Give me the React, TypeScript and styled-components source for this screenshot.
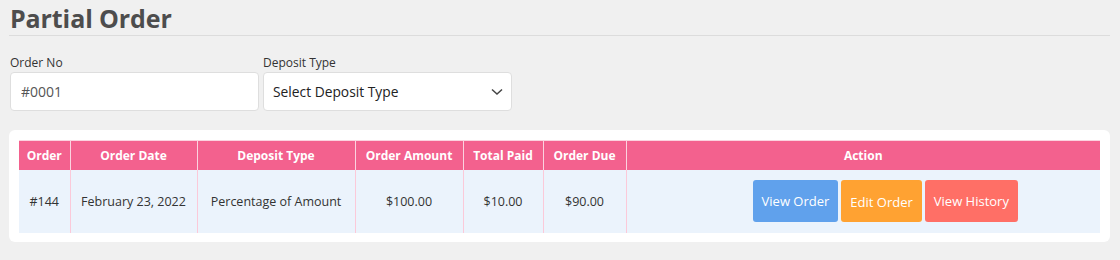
import React from "react";
import styled, { createGlobalStyle } from "styled-components";

const Global = createGlobalStyle`
  html, body { margin: 0; padding: 0; background: #f0f0f0; }
  body { font-family: "Open Sans", "Noto Sans", sans-serif; color: #333; }
  * { box-sizing: border-box; }
`;

const Page = styled.div`
  padding: 0 10px 0 9px;
`;

const Title = styled.h1`
  margin: 0;
  padding: 2px 0 0 1px;
  font-size: 25px;
  line-height: 32px;
  font-weight: 700;
  color: #4d4d4d;
  letter-spacing: -0.1px;
`;

const Rule = styled.hr`
  margin: 1px 0 0 0;
  border: 0;
  border-top: 1px solid #dcdcdc;
`;

const FormRow = styled.div`
  display: flex;
  gap: 4px;
  padding: 19px 0 0 1px;
`;

const Field = styled.div`
  display: flex;
  flex-direction: column;
  width: 249px;
`;

const Label = styled.label`
  font-size: 12px;
  line-height: 16px;
  color: #333;
  margin-bottom: 1px;
`;

const TextInput = styled.input`
  height: 39px;
  border: 1px solid #dedede;
  border-radius: 4px;
  background: #fff;
  padding: 0 10px;
  font-family: inherit;
  font-size: 14px;
  color: #555;
  outline: none;
`;

const SelectBox = styled.div`
  position: relative;
  height: 39px;
  border: 1px solid #dedede;
  border-radius: 4px;
  background: #fff;
  display: flex;
  align-items: center;
  justify-content: space-between;
  padding: 0 8px 0 9px;
  font-size: 13.8px;
  color: #222;
`;

const Card = styled.div`
  margin-top: 19px;
  background: #fff;
  border-radius: 6px;
  padding: 10px 10px 9px;
`;

const Table = styled.table`
  width: 100%;
  border-collapse: collapse;
  table-layout: fixed;
`;

const Th = styled.th`
  background: #f3618e;
  color: #fff;
  font-size: 12px;
  font-weight: 700;
  height: 29px;
  padding: 0 4px;
  text-align: center;
  border-left: 1px solid #fbd3df;
  border-top: 1px solid #fbd3df;
  white-space: nowrap;
  &:first-child { border-left: 0; }
`;

const Td = styled.td<{ $pad?: number }>`
  background: #ebf3fc;
  height: 63px;
  font-size: 12.5px;
  color: #333;
  text-align: center;
  padding: 0 4px 0 ${(p) => p.$pad ?? 4}px;
  border-left: 1px solid #fbc9d9;
  white-space: nowrap;
  &:first-child { border-left: 0; }
`;

const Btn = styled.button<{ $bg: string; $dy?: number }>`
  display: inline-block;
  vertical-align: middle;
  height: 42px;
  margin: 0 1.5px;
  padding: ${(p) => (p.$dy ? `${p.$dy}px` : "0")} 9px 0;
  border: 0;
  border-radius: 3px;
  background: ${(p) => p.$bg};
  color: #fff;
  font-family: inherit;
  font-size: 13px;
  cursor: pointer;
`;

const cols = [51, 127, 158, 108, 80, 83, 474];

export default function App() {
  return (
    <>
      <Global />
      <Page>
        <Title>Partial Order</Title>
        <Rule />
        <FormRow>
          <Field>
            <Label>Order No</Label>
            <TextInput defaultValue="#0001" />
          </Field>
          <Field>
            <Label>Deposit Type</Label>
            <SelectBox>
              <span>Select Deposit Type</span>
              <svg width="12" height="8" viewBox="0 0 12 8">
                <path d="M1 1.5 L6 6 L11 1.5" fill="none" stroke="#444" strokeWidth="1.5" />
              </svg>
            </SelectBox>
          </Field>
        </FormRow>
        <Card>
          <Table>
            <colgroup>
              {cols.map((w, i) => (
                <col key={i} style={{ width: w }} />
              ))}
            </colgroup>
            <thead>
              <tr>
                <Th>Order</Th>
                <Th>Order Date</Th>
                <Th>Deposit Type</Th>
                <Th>Order Amount</Th>
                <Th>Total Paid</Th>
                <Th>Order Due</Th>
                <Th>Action</Th>
              </tr>
            </thead>
            <tbody>
              <tr>
                <Td>#144</Td>
                <Td>February 23, 2022</Td>
                <Td>Percentage of Amount</Td>
                <Td>$100.00</Td>
                <Td>$10.00</Td>
                <Td>$90.00</Td>
                <Td $pad={48}>
                  <Btn $bg="#60a1ec">View Order</Btn>
                  <Btn $bg="#ffa232" $dy={2}>Edit Order</Btn>
                  <Btn $bg="#ff6f66">View History</Btn>
                </Td>
              </tr>
            </tbody>
          </Table>
        </Card>
      </Page>
    </>
  );
}
